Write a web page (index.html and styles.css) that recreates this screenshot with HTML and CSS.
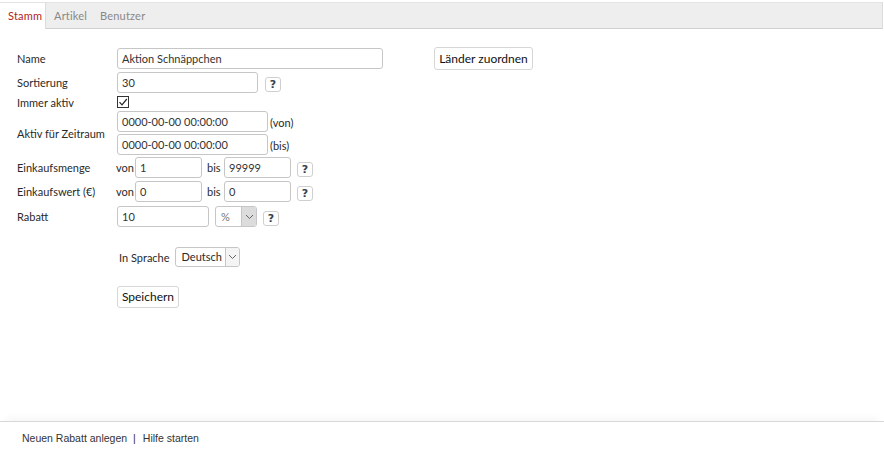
FILE: index.html
```html
<!DOCTYPE html>
<html lang="de">
<head>
<meta charset="utf-8">
<title>Rabatt</title>
<link rel="stylesheet" href="styles.css">
</head>
<body>
<div class="page">
  <div class="tabs">
    <div class="tab active">Stamm</div>
    <div class="tab">Artikel</div>
    <div class="tab">Benutzer</div>
  </div>
  <div class="main">
    <div class="row r-name">
      <div class="label">Name</div>
      <div class="input w-name">Aktion Schnäppchen</div>
      <div class="btn btn-laender">Länder zuordnen</div>
    </div>
    <div class="row r-sort">
      <div class="label">Sortierung</div>
      <div class="input w-sort">30</div>
      <div class="help">?</div>
    </div>
    <div class="row r-check">
      <div class="label">Immer aktiv</div>
      <div class="checkbox"><svg width="10" height="10" viewBox="0 0 10 10"><path d="M1.5 5.2 L4 7.8 L8.8 2" fill="none" stroke="#222" stroke-width="1.2"/></svg></div>
    </div>
    <div class="row r-zeit">
      <div class="label">Aktiv für Zeitraum</div>
      <div class="stack">
        <div class="pair"><div class="input w-date">0000-00-00 00:00:00</div><span class="suffix">(von)</span></div>
        <div class="pair"><div class="input w-date">0000-00-00 00:00:00</div><span class="suffix">(bis)</span></div>
      </div>
    </div>
    <div class="row r-menge">
      <div class="label">Einkaufsmenge</div>
      <span class="von">von</span>
      <div class="input w-small">1</div>
      <span class="bis">bis</span>
      <div class="input w-small">99999</div>
      <div class="help help-range">?</div>
    </div>
    <div class="row r-wert">
      <div class="label">Einkaufswert (€)</div>
      <span class="von">von</span>
      <div class="input w-small">0</div>
      <span class="bis">bis</span>
      <div class="input w-small">0</div>
      <div class="help help-range">?</div>
    </div>
    <div class="row r-rabatt">
      <div class="label">Rabatt</div>
      <div class="input w-rabatt">10</div>
      <div class="select w-pct"><span class="sel-val">%</span><span class="sel-arrow"><svg width="9" height="6" viewBox="0 0 9 6"><path d="M1 1 L4.5 4.5 L8 1" fill="none" stroke="#666" stroke-width="1"/></svg></span></div>
      <div class="help help-rabatt">?</div>
    </div>
    <div class="row r-sprache">
      <span class="sprache-label">In Sprache</span>
      <div class="select w-lang"><span class="sel-val">Deutsch</span><span class="sel-arrow light"><svg width="9" height="6" viewBox="0 0 9 6"><path d="M1 1 L4.5 4.5 L8 1" fill="none" stroke="#666" stroke-width="1"/></svg></span></div>
    </div>
    <div class="row r-save">
      <div class="btn btn-save">Speichern</div>
    </div>
  </div>
  <div class="footer">
    <span>Neuen Rabatt anlegen</span><span class="sep">|</span><span>Hilfe starten</span>
  </div>
</div>
</body>
</html>
```

FILE: styles.css
```css
* { box-sizing: border-box; }
html, body { margin: 0; padding: 0; background: #fff; }
body {
  font-family: Lato, "Open Sans", sans-serif;
  font-size: 11px;
  color: #2a2a2a;
}
.page {
  width: 884px;
  height: 455px;
  display: flex;
  flex-direction: column;
}
.tabs {
  margin-top: 2px;
  width: 883px;
  height: 27px;
  display: flex;
  background: #eeeeee;
  border-top: 1px solid #e3e3e3;
  border-bottom: 1px solid #d0d0d0;
  border-right: 1px solid #dcdcdc;
}
.tab {
  padding: 0 0 0 8px;
  line-height: 25px;
  color: #888;
  width: 46px;
  letter-spacing: 0.2px;
}
.tab.active {
  background: #fff;
  color: #b22222;
  border-right: 1px solid #dcdcdc;
  height: 26px;
  margin-bottom: -1px;
  width: 46px;
  padding-left: 8px;
}
.main {
  flex: 1;
  padding: 17px 0 0 17px;
}
.row {
  display: flex;
  align-items: center;
}
.label {
  width: 100px;
  flex: none;
}
.input {
  height: 21px;
  border: 1px solid #c6c6c6;
  border-radius: 3px;
  padding: 0 4px;
  line-height: 19px;
  color: #333;
  background: #fff;
  white-space: nowrap;
}
.w-name { width: 266px; }
.w-sort { width: 141px; }
.w-date { width: 151px; }
.w-small { width: 67px; }
.w-rabatt { width: 92px; }
.help {
  width: 16px;
  height: 15px;
  border: 1px solid #cfcfcf;
  border-radius: 3px;
  text-align: center;
  line-height: 14px;
  font-family: "DejaVu Sans", sans-serif;
  font-weight: bold;
  font-size: 11px;
  color: #34404e;
  background: #fff;
}
.btn {
  border: 1px solid #d6d6d6;
  border-radius: 3px;
  background: #fff;
  color: #111;
  font-family: Lato, sans-serif;
  font-size: 12px;
  text-align: center;
}
.btn-laender {
  margin-left: 51px;
  width: 99px;
  height: 23px;
  line-height: 21px;
}
.r-name { height: 23px; margin-top: 1px; }
.r-sort { margin-top: 2px; }
.r-sort .help { margin-left: 7px; margin-top: 4px; }
.r-check { margin-top: 2px; height: 14px; }
.checkbox {
  width: 12px;
  height: 12px;
  border: 1px solid #333;
  display: flex;
  align-items: center;
  justify-content: center;
  background: #fff;
}
.r-zeit { margin-top: 2px; }
.stack { display: flex; flex-direction: column; gap: 2px; }
.pair { display: flex; align-items: center; }
.suffix { margin-left: 2px; margin-top: 1px; }
.r-menge { margin-top: 2px; }
.r-wert { margin-top: 3px; }
.r-rabatt { margin-top: 4px; }
.von { width: 19px; flex: none; margin-left: -1px; }
.bis { margin-left: 5px; width: 17px; flex: none; }
.help-range { margin-left: 6px; margin-top: 4px; }
.select {
  display: flex;
  height: 21px;
  border: 1px solid #c6c6c6;
  border-radius: 3px;
  background: #fff;
  overflow: hidden;
}
.sel-val { flex: 1; padding-left: 6px; line-height: 19px; }
.sel-arrow {
  width: 15px;
  border-left: 1px solid #c6c6c6;
  background: #dcdcdc;
  display: flex;
  align-items: center;
  justify-content: center;
}
.sel-arrow.light { background: #f4f4f4; width: 14px; }
.w-pct { width: 42px; margin-left: 6px; }
.w-pct .sel-val { color: #777; padding-left: 5px; }
.help-rabatt { margin-left: 6px; margin-top: 4px; }
.r-sprache { margin-top: 20px; padding-left: 102px; }
.sprache-label { margin-right: 5px; }
.w-lang { width: 65px; height: 20px; }
.w-lang .sel-val { padding-left: 6px; line-height: 18px; }
.r-save { margin-top: 19px; padding-left: 100px; }
.btn-save {
  width: 62px;
  height: 22px;
  line-height: 20px;
}
.footer {
  height: 34px;
  width: 884px;
  border-top: 1px solid #d8d8d8;
  box-shadow: 0 -8px 10px -6px rgba(0,0,0,0.05);
  padding-left: 22px;
  padding-top: 10px;
  font-family: "Liberation Sans", Arial, sans-serif;
  font-size: 10.5px;
  color: #333;
}
.sep { margin: 0 7px 0 6px; }
```
